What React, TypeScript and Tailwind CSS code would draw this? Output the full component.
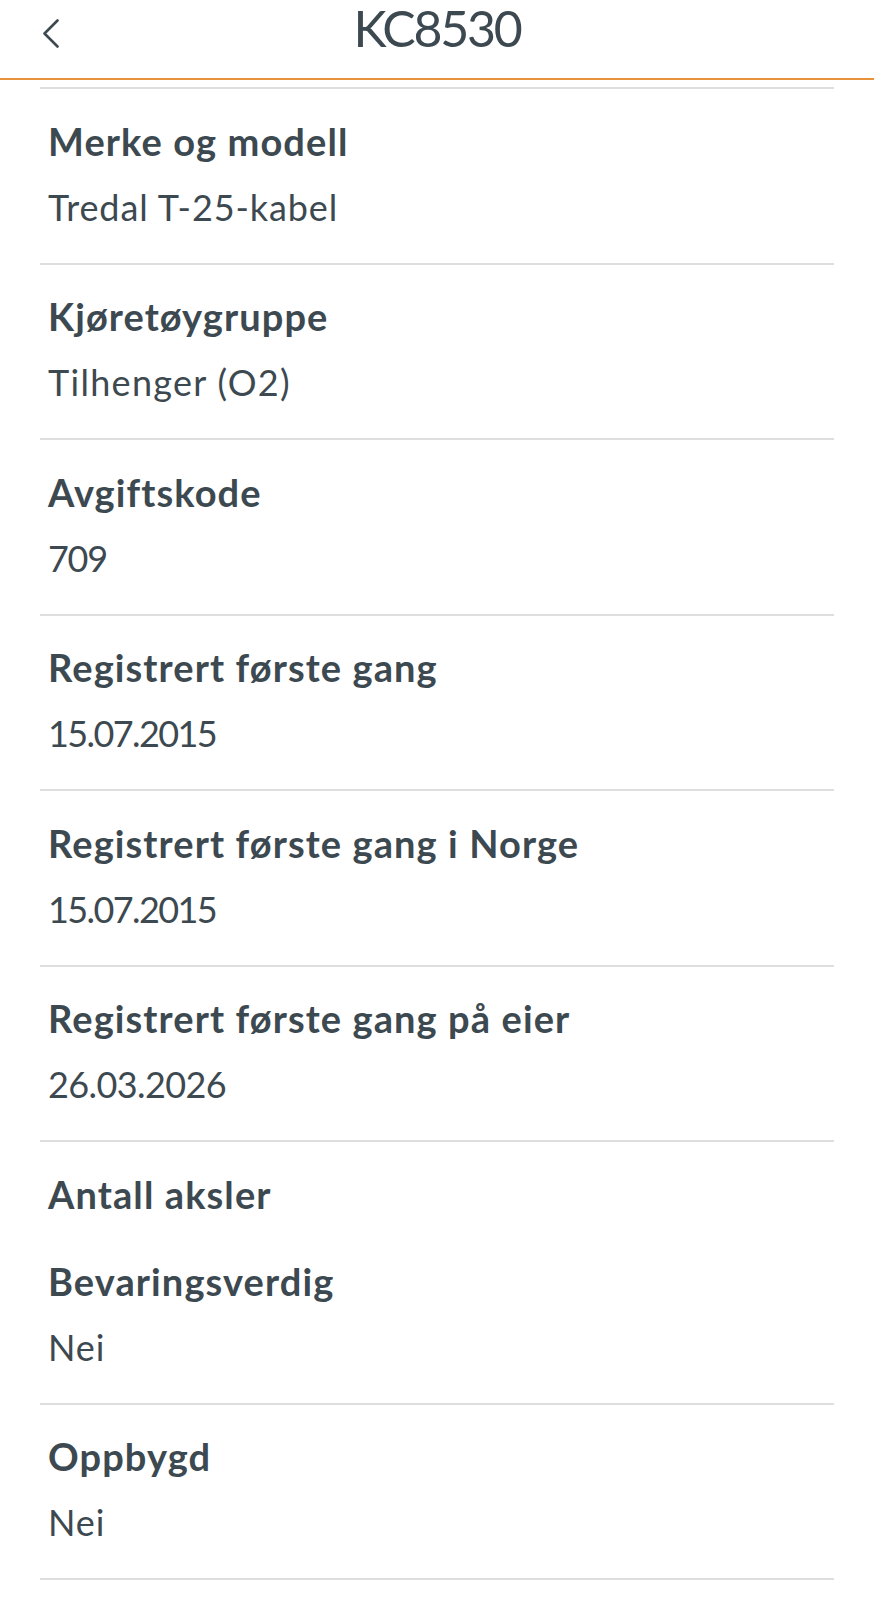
import React from "react";

type Row = { label: string; value?: string; track?: string; noBorder?: boolean; tight?: boolean };

const rows: Row[] = [
  { label: "Merke og modell", value: "Tredal T-25-kabel", track: "tracking-[0.9px]" },
  { label: "Kjøretøygruppe", value: "Tilhenger (O2)", track: "tracking-[1.3px]" },
  { label: "Avgiftskode", value: "709", track: "tracking-[-1.3px]" },
  { label: "Registrert første gang", value: "15.07.2015", track: "tracking-[-1.6px]" },
  { label: "Registrert første gang i Norge", value: "15.07.2015", track: "tracking-[-1.6px]" },
  { label: "Registrert første gang på eier", value: "26.03.2026", track: "tracking-[-0.6px]" },
  { label: "Antall aksler", noBorder: true },
  { label: "Bevaringsverdig", value: "Nei", track: "tracking-[0.9px]", tight: true },
  { label: "Oppbygd", value: "Nei", track: "tracking-[0.9px]" },
];

export default function App() {
  return (
    <div
      className="w-[874px] min-h-[1600px] bg-white text-[#3d4950]"
      style={{ fontFamily: "Lato, 'Open Sans', sans-serif" }}
    >
      <header className="h-[80px] border-b-2 border-[#e8923c] grid grid-cols-[1fr_auto_1fr] items-start">
        <div className="pl-[42px] pt-[19px]">
          <svg width="18" height="29" viewBox="0 0 18 29" fill="none">
            <polyline
              points="15.5,1.5 2.5,14.5 15.5,27.5"
              stroke="#3d4950"
              strokeWidth="2.6"
              strokeLinecap="round"
              strokeLinejoin="round"
            />
          </svg>
        </div>
        <h1 className="pt-[2.5px] text-[50px] leading-[50px] font-normal tracking-[-2.2px]">KC8530</h1>
        <div />
      </header>
      <div className="mx-10 mt-[7px] border-t-2 border-[#dedede]">
        {rows.map((r) => (
          <div
            key={r.label}
            className={
              (r.tight ? "pt-0 " : "pt-[25.5px] ") +
              (r.noBorder ? "pb-[35px] " : "pb-[31px] border-b-2 border-[#dedede] ") +
              "pl-[8px]"
            }
          >
            <div className="text-[38px] leading-[52px] font-bold tracking-[1.1px]">{r.label}</div>
            {r.value && (
              <div className={"mt-[16px] text-[36px] leading-[49px] font-normal " + r.track}>
                {r.value}
              </div>
            )}
          </div>
        ))}
      </div>
    </div>
  );
}
